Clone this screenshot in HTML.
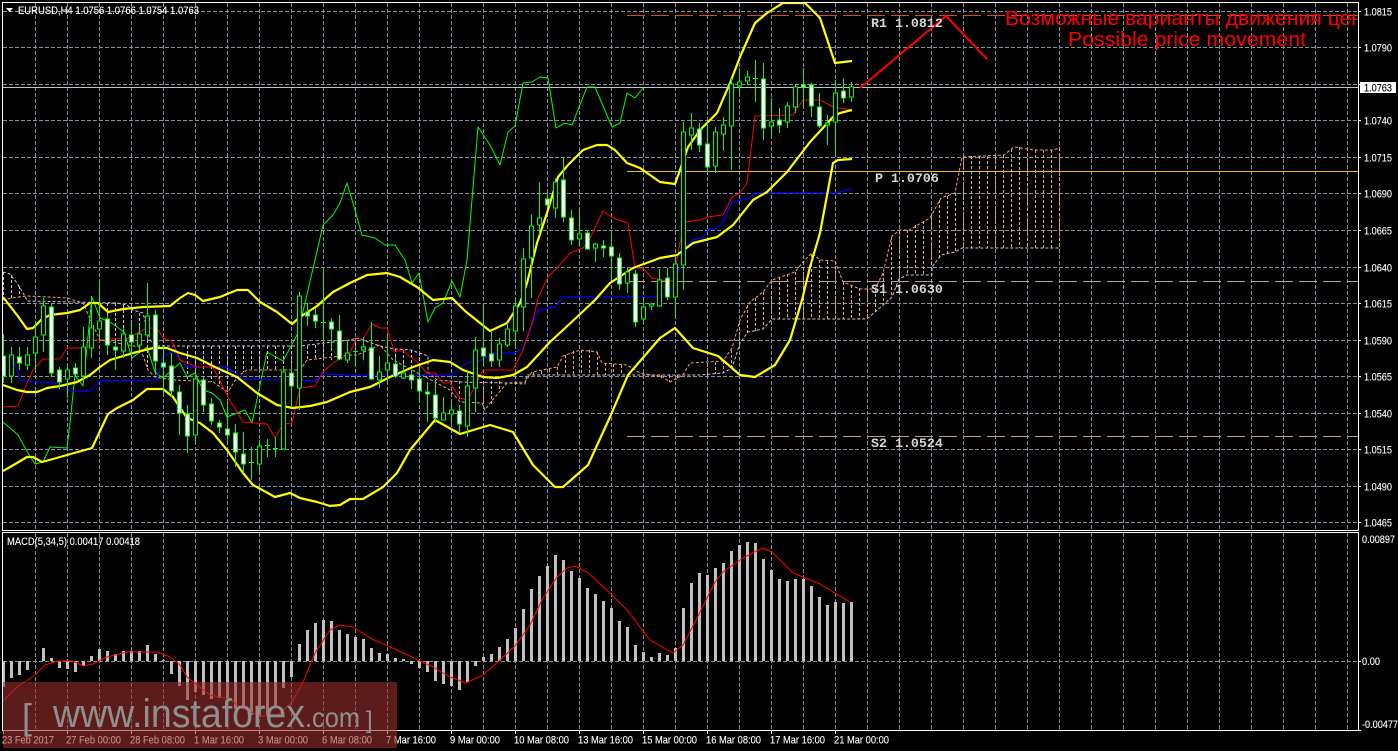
<!DOCTYPE html>
<html><head><meta charset="utf-8"><title>EURUSD,H4</title>
<style>
html,body{margin:0;padding:0;background:#000;width:1398px;height:751px;overflow:hidden}
svg{display:block}
text{font-family:"Liberation Sans",sans-serif;font-size:11px;fill:#fff;stroke:#fff;stroke-width:.12}
.m{font-family:"Liberation Mono",monospace;font-weight:bold;font-size:13.3px;fill:#d6d6d6;stroke:none}
.c{shape-rendering:crispEdges}
.t{fill:none;stroke-linejoin:round}
.r{font-size:20px;fill:#f00;stroke:none}
.w{fill:#8f8f8f;stroke:none}
</style></head><body>
<svg width="1398" height="751" viewBox="0 0 1398 751" xmlns="http://www.w3.org/2000/svg">
<defs>
<clipPath id="a"><rect x="3" y="3" width="1355" height="527"/></clipPath>
<clipPath id="b"><rect x="3" y="533" width="1355" height="197"/></clipPath>
</defs>
<rect width="1398" height="751" fill="#000"/>

<!-- grid -->
<g class="c" fill="none" stroke="#8494a5" stroke-dasharray="4 2">
<path d="M3 11.5H1358M3 47.5H1358M3 84.5H1358M3 120.5H1358M3 157.5H1358M3 193.5H1358M3 230.5H1358M3 267.5H1358M3 303.5H1358M3 340.5H1358M3 376.5H1358M3 413.5H1358M3 449.5H1358M3 486.5H1358M3 522.5H1358M3 661.5H1358"/>
<path d="M35.5 3V530M67.5 3V530M99.5 3V530M131.5 3V530M163.5 3V530M195.5 3V530M227.5 3V530M259.5 3V530M291.5 3V530M323.5 3V530M355.5 3V530M387.5 3V530M419.5 3V530M451.5 3V530M483.5 3V530M515.5 3V530M547.5 3V530M579.5 3V530M611.5 3V530M643.5 3V530M675.5 3V530M707.5 3V530M739.5 3V530M771.5 3V530M803.5 3V530M835.5 3V530M867.5 3V530M899.5 3V530M931.5 3V530M963.5 3V530M995.5 3V530M1027.5 3V530M1059.5 3V530M1091.5 3V530M1123.5 3V530M1155.5 3V530M1187.5 3V530M1219.5 3V530M1251.5 3V530M1283.5 3V530M1315.5 3V530M1347.5 3V530"/>
<path stroke="#8f8f8f" d="M35.5 533V730M67.5 533V730M99.5 533V730M131.5 533V730M163.5 533V730M195.5 533V730M227.5 533V730M259.5 533V730M291.5 533V730M323.5 533V730M355.5 533V730M387.5 533V730M419.5 533V730M451.5 533V730M483.5 533V730M515.5 533V730M547.5 533V730M579.5 533V730M611.5 533V730M643.5 533V730M675.5 533V730M707.5 533V730M739.5 533V730M771.5 533V730M803.5 533V730M835.5 533V730M867.5 533V730M899.5 533V730M931.5 533V730M963.5 533V730M995.5 533V730M1027.5 533V730M1059.5 533V730M1091.5 533V730M1123.5 533V730M1155.5 533V730M1187.5 533V730M1219.5 533V730M1251.5 533V730M1283.5 533V730M1315.5 533V730M1347.5 533V730"/>
</g>

<g clip-path="url(#a)">
<!-- ichimoku cloud -->
<g fill="none" stroke-dasharray="3 2" stroke-width="1">
<path stroke="#d8bfd8" d="M3.5 272V300M11.5 275V298M19.5 286V297M91.5 303V323M99.5 303V340M107.5 303V340M115.5 303V340M123.5 305V342M131.5 310V343M139.5 313V347M147.5 340V367M187.5 346V380M195.5 346V381M203.5 346V380M211.5 346V382M219.5 346V385M227.5 346V392M235.5 346V378M243.5 346V372M251.5 346V370M259.5 346V370M267.5 346V370M275.5 346V370M283.5 346V370M291.5 346V370M299.5 346V370M307.5 346V360M315.5 345V360M323.5 344V360M331.5 343V360M339.5 342V360M347.5 340V360M355.5 338V355M363.5 341V352M387.5 346V360M395.5 349V362M403.5 350V365M411.5 350V368M419.5 353V372"/>
<path stroke="#f4a460" d="M459.5 381V400M467.5 381V402M475.5 381V403M483.5 381V405M491.5 381V405M499.5 381V390M533.5 372V375M541.5 371V375M549.5 369V375M557.5 367V375M565.5 355V375M573.5 351V375M581.5 350V375M589.5 350V375M597.5 352V375M605.5 363V375M613.5 364V375M621.5 365V375M653.5 375V377M661.5 375V378M669.5 375V382M677.5 375V378M707.5 363V375M715.5 362V374M723.5 361V373M731.5 350V368M739.5 322V344M747.5 305V333M755.5 298V331M763.5 292V329M771.5 281V320M779.5 277V319M787.5 274V319M795.5 272V319M803.5 262V319M811.5 254V319M819.5 260V319M827.5 261V319M835.5 261V319M843.5 282V319M851.5 285V319M859.5 288V319M867.5 289V319M875.5 289V313M883.5 273V305M891.5 237V297M899.5 231V279M907.5 230V275M915.5 225V275M923.5 221V275M931.5 217V267M939.5 200V258M947.5 196V254M955.5 193V252M963.5 157V248M971.5 156V248M979.5 156V248M987.5 156V248M995.5 156V248M1003.5 155V248M1011.5 149V248M1019.5 147V248M1027.5 148V248M1035.5 150V248M1043.5 150V248M1051.5 150V248M1059.5 148V248"/>
<polyline class="t" stroke="#d8bfd8" points="3,272 10,274 17,283 23,293 27,300 27,301 117,303 127,305 133,310 143,313 150,340 157,346 300,346 350,340 357,338 380,346 395,349 411,350 428,356 428,372 437,380 460,382 507,383 525,384 527,375 700,375 723,373 732,368 740,343 748,332 763,329 772,319 867,319 883,305 892,297 899,279 907,275 932,275 932,267 941,255 955,252 962,248 1060,248"/>
<polyline class="t" stroke="#f4a460" points="3,300 12,298 27,296 67,298 83,303 92,323 100,340 140,347 148,370 155,377 173,380 213,382 228,392 237,377 247,370 300,370 307,360 350,355 357,355 380,345 393,360 450,390 460,402 482,403 485,410 490,403 507,383 525,382 532,372 557,367 563,356 580,350 597,352 602,363 627,365 640,373 663,377 670,382 683,375 690,363 723,361 732,348 740,320 750,302 763,292 772,280 795,272 803,262 812,253 820,260 835,261 843,282 860,289 875,289 883,273 892,236 900,230 909,230 930,218 941,198 955,193 962,157 1004,155 1014,147 1035,150 1053,150 1060,148"/>
</g>

<!-- pivots -->
<g class="c" fill="none">
<path stroke="#d0502a" stroke-dasharray="18 6" d="M627 15.5H1358"/>
<path stroke="#e6bc1e" d="M627 171.5H1358"/>
<path stroke="#bd9a8e" stroke-dasharray="18 6" d="M627 281.5H1358"/>
<path stroke="#c4938a" stroke-dasharray="18 6" d="M627 436.5H1358"/>
<path stroke="#c4c4c4" d="M3 87.5H1358"/>
</g>

<!-- chikou -->
<polyline class="t" stroke="#00ff00" points="3,422 18,435 28,453 35,464 43,462 50,447 67,448 70,423 75,375 83,386 92,297 100,318 110,322 124,332 132,358 147,347 155,372 163,378 180,363 187,377 195,373 203,390 212,393 220,400 227,417 245,410 252,423 267,352 283,361 298,333 315,260 323,225 333,215 340,203 347,183 355,210 362,235 375,238 385,245 395,245 405,260 412,283 419,273 428,322 435,308 443,303 452,281 460,297 467,260 478,127 490,145 500,165 508,132 515,126 523,83 532,82 540,77 548,78 556,128 565,123 572,125 587,87 595,87 612,127 620,123 627,93 635,98 643,88"/>
<!-- kijun -->
<polyline class="t" stroke="#0000ff" stroke-width="1.2" points="3,357 13,358 20,380 33,382 57,383 70,391 90,391 100,381 157,380 163,357 173,351 187,367 227,367 243,379 315,381 323,374 350,375 452,375 468,362 478,362 492,353 515,353 523,348 538,310 555,307 563,297 655,297 670,293 678,273 685,248 692,240 703,238 708,230 717,228 723,222 732,202 747,199 755,193 837,193 852,188"/>
<!-- tenkan -->
<polyline class="t" stroke="#ff0000" points="3,407 18,406 27,383 33,370 43,359 60,359 67,348 87,348 95,340 110,339 128,338 147,328 157,328 163,338 172,341 180,360 197,367 213,367 228,397 243,422 267,424 275,438 283,424 292,423 300,388 315,386 323,372 333,363 350,353 356,339 363,339 372,324 380,328 387,328 394,351 403,351 417,362 427,373 435,373 443,383 450,383 460,398 468,400 483,370 513,370 523,350 533,320 538,298 548,277 558,267 570,253 583,248 588,242 603,211 613,218 628,223 635,268 643,268 652,278 667,281 673,281 680,243 685,222 700,220 708,217 723,215 732,197 740,193 747,183 755,116 793,115 803,100 820,100 833,107 852,110"/>

<!-- bollinger -->
<g class="t" stroke="#ffff00" stroke-width="2.2">
<polyline points="3,297 17,315 27,329 33,328 42,319 50,315 67,313 80,310 90,303 98,303 108,312 123,309 143,307 170,306 180,298 188,293 195,295 203,301 220,297 237,290 248,290 260,302 277,312 292,324 300,317 317,306 333,292 350,283 367,275 387,273 400,277 417,287 433,300 452,298 465,311 490,331 507,323 520,303 527,283 537,243 547,213 558,177 568,165 583,150 597,145 607,145 615,150 627,163 640,168 660,182 675,184 680,170 688,147 700,130 717,113 730,83 740,57 755,23 767,13 783,3 805,3 820,18 835,63 852,61"/>
<polyline points="3,385 17,390 27,392 37,392 47,388 60,386 77,382 90,375 100,367 110,360 133,353 153,348 167,348 180,353 197,358 217,368 237,377 257,393 277,405 293,408 310,406 327,402 350,392 370,387 390,377 413,367 433,360 450,362 463,370 483,377 497,378 513,375 527,367 550,342 577,317 595,300 610,283 633,268 660,258 677,255 693,243 717,237 733,225 753,200 767,192 787,172 810,142 833,117 840,113 852,110"/>
<polyline points="3,471 17,463 27,457 33,457 42,462 53,459 67,455 92,448 108,414 117,408 133,400 147,389 163,389 173,397 187,418 200,423 213,433 227,450 243,473 253,485 275,497 290,493 300,498 317,502 330,506 340,505 350,499 363,499 383,487 397,473 410,450 435,420 460,434 490,425 513,432 533,465 555,487 563,487 588,465 610,417 628,375 660,338 675,328 693,348 718,356 740,375 755,377 775,365 790,340 802,300 810,267 820,233 828,190 833,163 838,160 852,159"/>
</g>

<!-- candles -->
<g class="c" fill="none" stroke="#00ff00">
<path d="M3.5 334V383M11.5 347V383M19.5 347V370M27.5 347V370M35.5 322V372M43.5 298V352M51.5 303V377M59.5 367V389M67.5 365V398M75.5 363V377M83.5 327V380M91.5 296V358M99.5 280V340M107.5 315V355M115.5 340V370M123.5 328V358M131.5 321V358M139.5 323V350M147.5 283V340M155.5 310V375M163.5 347V393M171.5 353V397M179.5 385V435M187.5 405V453M195.5 375V443M203.5 377V412M211.5 398V425M219.5 420V433M227.5 403V443M235.5 424V467M243.5 432V473M251.5 447V480M259.5 440V472M267.5 439V457M275.5 437V457M283.5 367V449M291.5 367V407M299.5 292V410M307.5 303V326M315.5 308V328M323.5 267V340M331.5 318V350M339.5 315V360M347.5 340V363M355.5 349V367M363.5 337V360M371.5 322V380M379.5 356V388M387.5 337V383M395.5 357V378M403.5 363V379M411.5 370V389M419.5 367V403M427.5 382V422M435.5 380V423M443.5 397V420M451.5 402V423M459.5 405V433M467.5 370V437M475.5 337V412M483.5 304V367M491.5 332V367M499.5 338V367M507.5 323V347M515.5 298V346M523.5 248V331M531.5 214V298M539.5 182V235M547.5 192V207M555.5 178V218M563.5 158V222M571.5 210V245M579.5 211V247M587.5 230V250M595.5 243V262M603.5 240V257M611.5 234V280M619.5 253V290M627.5 267V293M635.5 270V327M643.5 297V325M651.5 303V310M659.5 269V307M667.5 268V300M675.5 256V317M683.5 122V290M691.5 113V150M699.5 123V152M707.5 122V172M715.5 127V173M723.5 117V151M731.5 78V170M739.5 68V93M747.5 71V85M755.5 60V102M763.5 63V140M771.5 98V137M779.5 108V133M787.5 102V128M795.5 85V113M803.5 68V107M811.5 83V117M819.5 93V128M827.5 115V145M835.5 80V154M843.5 78V103M851.5 82V102"/>
<path fill="#fff" d="M1.5 356h4v20h-4zM17.5 357h4v6h-4zM49.5 307h4v66h-4zM57.5 370h4v12h-4zM73.5 368h4v6h-4zM105.5 319h4v26h-4zM113.5 347h4v3h-4zM129.5 335h4v7h-4zM153.5 315h4v46h-4zM161.5 363h4v4h-4zM169.5 366h4v25h-4zM177.5 392h4v21h-4zM185.5 414h4v22h-4zM201.5 380h4v25h-4zM209.5 404h4v17h-4zM217.5 423h4v4h-4zM225.5 429h4v6h-4zM233.5 433h4v19h-4zM241.5 454h4v10h-4zM289.5 373h4v13h-4zM305.5 312h4v4h-4zM313.5 315h4v6h-4zM329.5 322h4v7h-4zM337.5 331h4v28h-4zM369.5 348h4v31h-4zM393.5 364h4v12h-4zM409.5 375h4v5h-4zM417.5 379h4v12h-4zM425.5 392h4v2h-4zM433.5 395h4v23h-4zM457.5 411h4v13h-4zM481.5 348h4v8h-4zM489.5 354h4v7h-4zM545.5 199h4v6h-4zM561.5 180h4v37h-4zM569.5 218h4v22h-4zM585.5 233h4v16h-4zM601.5 246h4v2h-4zM609.5 247h4v9h-4zM617.5 258h4v26h-4zM633.5 274h4v48h-4zM665.5 278h4v19h-4zM697.5 129h4v16h-4zM705.5 144h4v23h-4zM761.5 79h4v49h-4zM777.5 120h4v5h-4zM801.5 85h4v2h-4zM809.5 85h4v21h-4zM817.5 107h4v19h-4zM841.5 91h4v7h-4z"/>
<path fill="#000" d="M9.5 355h4v21h-4zM25.5 355h4v10h-4zM33.5 337h4v16h-4zM41.5 306h4v29h-4zM65.5 370h4v9h-4zM81.5 347h4v29h-4zM89.5 328h4v20h-4zM97.5 321h4v8h-4zM121.5 334h4v17h-4zM137.5 334h4v11h-4zM145.5 316h4v19h-4zM193.5 379h4v56h-4zM257.5 446h4v18h-4zM281.5 372h4v77h-4zM297.5 296h4v92h-4zM345.5 353h4v7h-4zM361.5 347h4v3h-4zM377.5 372h4v8h-4zM385.5 363h4v7h-4zM401.5 373h4v5h-4zM441.5 413h4v7h-4zM449.5 410h4v4h-4zM465.5 386h4v40h-4zM473.5 350h4v38h-4zM497.5 344h4v16h-4zM505.5 329h4v16h-4zM513.5 306h4v25h-4zM521.5 259h4v48h-4zM529.5 226h4v32h-4zM537.5 218h4v7h-4zM553.5 182h4v26h-4zM577.5 234h4v5h-4zM593.5 244h4v4h-4zM625.5 272h4v11h-4zM641.5 307h4v12h-4zM649.5 304h4v2h-4zM657.5 280h4v26h-4zM673.5 264h4v33h-4zM681.5 132h4v133h-4zM689.5 128h4v7h-4zM713.5 132h4v34h-4zM721.5 125h4v9h-4zM729.5 84h4v42h-4zM737.5 82h4v4h-4zM745.5 77h4v4h-4zM769.5 122h4v4h-4zM785.5 106h4v16h-4zM793.5 87h4v20h-4zM825.5 123h4v2h-4zM833.5 93h4v29h-4zM849.5 87h4v10h-4z"/>
<path d="M249 462.5h5M265 445.5h5M273 448.5h5M321 322.5h5M353 351.5h5M753 78.5h5"/>
</g>

<!-- arrow -->
<polyline class="t" stroke="#ff0000" stroke-width="2" points="860,88 946,16 987,59"/>

<!-- labels -->
<text class="r" x="1005" y="25" textLength="358" lengthAdjust="spacingAndGlyphs">Возможные варианты движения цен</text>
<text class="r" x="1068" y="46" textLength="238" lengthAdjust="spacingAndGlyphs">Possible price movement</text>
<text class="m" x="871" y="27">R1 1.0812</text>
<text class="m" x="875" y="182">P 1.0706</text>
<text class="m" x="871" y="293">S1 1.0630</text>
<text class="m" x="871" y="447">S2 1.0524</text>
</g>

<!-- MACD -->
<g clip-path="url(#b)">
<path class="c" fill="none" stroke="#c0c0c0" stroke-width="3" d="M3.5 661V687M11.5 661V678M19.5 661V675M27.5 661V670M43.5 661V648M51.5 661V658M59.5 661V668M67.5 661V669M75.5 661V672M83.5 661V666M91.5 661V656M99.5 661V649M107.5 661V651M115.5 661V654M123.5 661V651M131.5 661V651M139.5 661V651M147.5 661V645M155.5 661V654M163.5 661V660M171.5 661V674M179.5 661V686M187.5 661V700M195.5 661V692M203.5 661V695M211.5 661V699M219.5 661V698M227.5 661V698M235.5 661V709M243.5 661V709M251.5 661V715M259.5 661V717M267.5 661V715M275.5 661V708M283.5 661V688M291.5 661V677M299.5 661V644M307.5 661V630M315.5 661V623M323.5 661V620M331.5 661V621M339.5 661V630M347.5 661V634M355.5 661V637M363.5 661V639M371.5 661V648M379.5 661V653M387.5 661V654M395.5 661V658M403.5 661V659M411.5 661V664M419.5 661V668M427.5 661V672M435.5 661V681M443.5 661V684M451.5 661V686M459.5 661V690M467.5 661V682M475.5 661V666M483.5 661V657M491.5 661V654M499.5 661V647M507.5 661V639M515.5 661V628M523.5 661V609M531.5 661V589M539.5 661V576M547.5 661V566M555.5 661V555M563.5 661V560M571.5 661V571M579.5 661V578M587.5 661V588M595.5 661V594M603.5 661V601M611.5 661V608M619.5 661V621M627.5 661V627M635.5 661V645M643.5 661V652M651.5 661V657M659.5 661V653M667.5 661V655M675.5 661V648M683.5 661V608M691.5 661V583M699.5 661V573M707.5 661V575M715.5 661V568M723.5 661V563M731.5 661V551M739.5 661V545M747.5 661V542M755.5 661V543M763.5 661V559M771.5 661V570M779.5 661V579M787.5 661V581M795.5 661V579M803.5 661V579M811.5 661V586M819.5 661V597M827.5 661V605M835.5 661V602M843.5 661V603M851.5 661V602"/>
<polyline class="t" stroke="#ff0000" points="3,701 17,687 35,675 45,665 58,661 73,661 83,666 93,664 107,657 127,652 157,652 170,657 180,665 187,677 210,695 230,699 240,707 260,716 277,716 292,702 303,682 315,653 330,630 340,625 353,627 370,638 397,650 420,661 433,667 450,677 466,683 483,675 500,660 515,646 530,625 543,598 557,577 567,568 575,566 587,572 610,593 627,610 650,640 673,653 683,645 697,618 715,582 723,572 743,558 762,548 772,552 793,573 820,584 850,602"/>
</g>

<!-- frame -->
<g class="c" fill="none" stroke="#fff">
<path d="M2.5 2.5H1358.5V530.5H2.5ZM2.5 532.5H1358.5V730.5H2.5Z"/>
<path d="M1358 11.5h3M1358 47.5h3M1358 84.5h3M1358 120.5h3M1358 157.5h3M1358 193.5h3M1358 230.5h3M1358 267.5h3M1358 303.5h3M1358 340.5h3M1358 376.5h3M1358 413.5h3M1358 449.5h3M1358 486.5h3M1358 522.5h3M1358 661.5h3M1358 730.5h3"/>
<path d="M3.5 730V734M67.5 730V734M131.5 730V734M195.5 730V734M259.5 730V734M323.5 730V734M387.5 730V734M451.5 730V734M515.5 730V734M579.5 730V734M643.5 730V734M707.5 730V734M771.5 730V734M835.5 730V734"/>
</g>

<!-- header texts -->
<path d="M6 8h7l-3.5 4z" fill="#fff"/>
<text x="18" y="14" textLength="181" lengthAdjust="spacingAndGlyphs">EURUSD,H4 1.0756 1.0766 1.0754 1.0763</text>
<text x="7" y="545" textLength="133" lengthAdjust="spacingAndGlyphs">MACD(5,34,5) 0.00417 0.00418</text>

<!-- price axis -->
<g>
<text x="1364" y="15.5" textLength="28" lengthAdjust="spacingAndGlyphs">1.0815</text>
<text x="1364" y="51.5" textLength="28" lengthAdjust="spacingAndGlyphs">1.0790</text>
<text x="1364" y="124.5" textLength="28" lengthAdjust="spacingAndGlyphs">1.0740</text>
<text x="1364" y="161.5" textLength="28" lengthAdjust="spacingAndGlyphs">1.0715</text>
<text x="1364" y="197.5" textLength="28" lengthAdjust="spacingAndGlyphs">1.0690</text>
<text x="1364" y="234.5" textLength="28" lengthAdjust="spacingAndGlyphs">1.0665</text>
<text x="1364" y="271.5" textLength="28" lengthAdjust="spacingAndGlyphs">1.0640</text>
<text x="1364" y="307.5" textLength="28" lengthAdjust="spacingAndGlyphs">1.0615</text>
<text x="1364" y="344.5" textLength="28" lengthAdjust="spacingAndGlyphs">1.0590</text>
<text x="1364" y="380.5" textLength="28" lengthAdjust="spacingAndGlyphs">1.0565</text>
<text x="1364" y="417.5" textLength="28" lengthAdjust="spacingAndGlyphs">1.0540</text>
<text x="1364" y="453.5" textLength="28" lengthAdjust="spacingAndGlyphs">1.0515</text>
<text x="1364" y="490.5" textLength="28" lengthAdjust="spacingAndGlyphs">1.0490</text>
<text x="1364" y="526.5" textLength="28" lengthAdjust="spacingAndGlyphs">1.0465</text>
<rect x="1360" y="82" width="36" height="11" fill="#fff"/>
<text x="1364" y="91.5" textLength="28" lengthAdjust="spacingAndGlyphs" style="fill:#000;stroke:#000">1.0763</text>
<text x="1362" y="543" textLength="33" lengthAdjust="spacingAndGlyphs">0.00897</text>
<text x="1362" y="665" textLength="18" lengthAdjust="spacingAndGlyphs">0.00</text>
<text x="1362" y="728" textLength="36" lengthAdjust="spacingAndGlyphs">-0.00477</text>
</g>

<!-- time axis -->
<g>
<text x="2" y="743.5" textLength="52" lengthAdjust="spacingAndGlyphs">23 Feb 2017</text>
<text x="66" y="743.5" textLength="55" lengthAdjust="spacingAndGlyphs">27 Feb 00:00</text>
<text x="130" y="743.5" textLength="55" lengthAdjust="spacingAndGlyphs">28 Feb 08:00</text>
<text x="194" y="743.5" textLength="50" lengthAdjust="spacingAndGlyphs">1 Mar 16:00</text>
<text x="258" y="743.5" textLength="50" lengthAdjust="spacingAndGlyphs">3 Mar 00:00</text>
<text x="322" y="743.5" textLength="50" lengthAdjust="spacingAndGlyphs">6 Mar 08:00</text>
<text x="386" y="743.5" textLength="50" lengthAdjust="spacingAndGlyphs">7 Mar 16:00</text>
<text x="450" y="743.5" textLength="50" lengthAdjust="spacingAndGlyphs">9 Mar 00:00</text>
<text x="514" y="743.5" textLength="55" lengthAdjust="spacingAndGlyphs">10 Mar 08:00</text>
<text x="578" y="743.5" textLength="55" lengthAdjust="spacingAndGlyphs">13 Mar 16:00</text>
<text x="642" y="743.5" textLength="55" lengthAdjust="spacingAndGlyphs">15 Mar 00:00</text>
<text x="706" y="743.5" textLength="55" lengthAdjust="spacingAndGlyphs">16 Mar 08:00</text>
<text x="770" y="743.5" textLength="55" lengthAdjust="spacingAndGlyphs">17 Mar 16:00</text>
<text x="834" y="743.5" textLength="55" lengthAdjust="spacingAndGlyphs">21 Mar 00:00</text>
</g>

<!-- watermark -->
<rect x="3" y="682" width="394" height="66" fill="#a03030" fill-opacity=".585"/>
<text class="w" x="22" y="729" style="font-size:36px">[</text>
<text class="w" x="53" y="727" textLength="252" lengthAdjust="spacingAndGlyphs" style="font-size:40px">www.instaforex</text>
<text class="w" x="305" y="727" textLength="55" lengthAdjust="spacingAndGlyphs" style="font-size:28px">.com</text>
<text class="w" x="366" y="728" style="font-size:24px">]</text>
</svg>
</body></html>
